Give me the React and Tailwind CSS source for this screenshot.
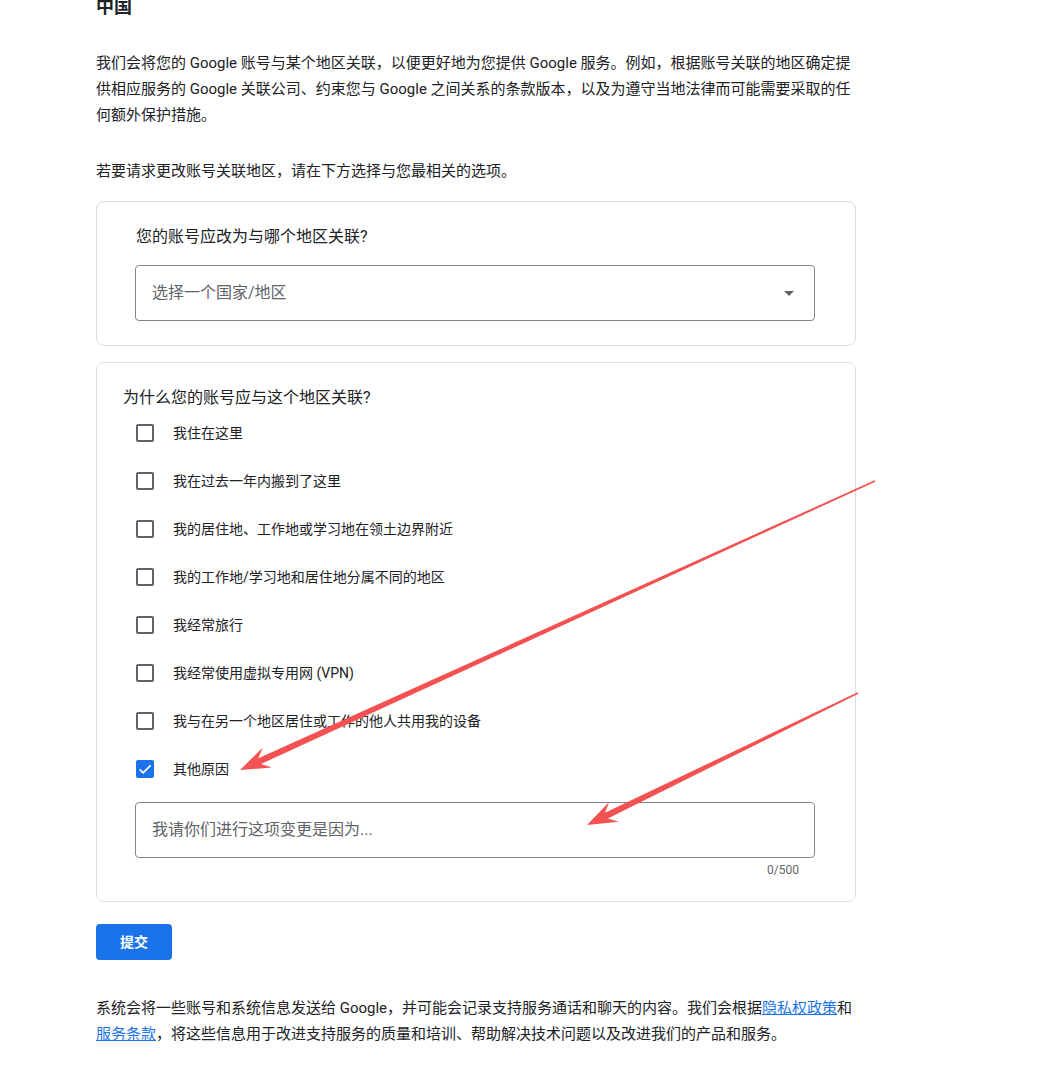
import React from 'react';

const reasons = [
  { label: '我住在这里', checked: false },
  { label: '我在过去一年内搬到了这里', checked: false },
  { label: '我的居住地、工作地或学习地在领土边界附近', checked: false },
  { label: '我的工作地/学习地和居住地分属不同的地区', checked: false },
  { label: '我经常旅行', checked: false },
  { label: '我经常使用虚拟专用网 (VPN)', checked: false },
  { label: '我与在另一个地区居住或工作的他人共用我的设备', checked: false },
  { label: '其他原因', checked: true },
];

function arrowPoints(x1, y1, x2, y2) {
  const headLen = 30;
  const headW = 11;
  const tailW = 0.8;
  const neckW = 3.2;
  const dx = x2 - x1;
  const dy = y2 - y1;
  const len = Math.hypot(dx, dy);
  const ux = dx / len;
  const uy = dy / len;
  const nx = -uy;
  const ny = ux;
  const neck = [x2 - ux * headLen * 0.72, y2 - uy * headLen * 0.72];
  const base = [x2 - ux * headLen, y2 - uy * headLen];
  const pts = [
    [x1 + nx * tailW, y1 + ny * tailW],
    [neck[0] + nx * neckW, neck[1] + ny * neckW],
    [base[0] + nx * headW, base[1] + ny * headW],
    [x2, y2],
    [base[0] - nx * headW, base[1] - ny * headW],
    [neck[0] - nx * neckW, neck[1] - ny * neckW],
    [x1 - nx * tailW, y1 - ny * tailW],
  ];
  return pts.map(p => p.join(',')).join(' ');
}

function Checkbox({ checked }) {
  if (checked) {
    return (
      <span className="flex h-[18px] w-[18px] items-center justify-center rounded-[2px] bg-[#1a73e8]">
        <svg width="16" height="16" viewBox="0 0 24 24" fill="none">
          <path d="M4 12.5l5.2 5.2L20.5 6.5" stroke="#fff" strokeWidth="2.6" />
        </svg>
      </span>
    );
  }
  return <span className="block h-[18px] w-[18px] rounded-[2px] border-2 border-[#5f6368]" />;
}

export default function App() {
  return (
    <div
      className="relative h-[1080px] w-[1064px] overflow-hidden bg-white text-[#202124]"
      style={{ fontFamily: 'Roboto, "Noto Sans CJK SC", sans-serif' }}
    >
      <div className="ml-[96px] w-[760px]">
        <h1 className="mt-[-5px] text-[18px] font-bold leading-[24px]">中国</h1>

        <p className="mt-[31px] text-[15px] leading-[26px]">
          我们会将您的 Google 账号与某个地区关联，以便更好地为您提供 Google 服务。例如，根据账号关联的地区确定提供相应服务的 Google 关联公司、约束您与 Google 之间关系的条款版本，以及为遵守当地法律而可能需要采取的任何额外保护措施。
        </p>

        <p className="mt-[30px] text-[15px] leading-[26px]">若要请求更改账号关联地区，请在下方选择与您最相关的选项。</p>

        {/* region select */}
        <div className="mt-[17px] rounded-lg border border-[#dadce0] px-[38px] pb-6 pt-6">
          <div className="pl-px text-[16px] leading-[22px]">您的账号应改为与哪个地区关联?</div>
          <div className="mt-[17px] flex h-14 w-[680px] items-center justify-between rounded border border-[#80868b] pl-4 pr-5">
            <span className="text-[16px] text-[#5f6368]">选择一个国家/地区</span>
            <svg width="10" height="5" viewBox="0 0 10 5">
              <path d="M0 0h10L5 5z" fill="#5f6368" />
            </svg>
          </div>
        </div>

        {/* reasons */}
        <div className="mt-[16px] rounded-lg border border-[#dadce0] px-[26px] pb-[23px] pt-[24px]">
          <div className="text-[16px] leading-[22px]">为什么您的账号应与这个地区关联?</div>
          <div className="flex flex-col">
            {reasons.map(r => (
              <label key={r.label} className="flex h-12 items-center">
                <span className="ml-[13px] mr-[19px]">
                  <Checkbox checked={r.checked} />
                </span>
                <span className="text-[14px]">{r.label}</span>
              </label>
            ))}
          </div>
          <div className="ml-[12px] mt-[9px] w-[680px]">
            <div className="flex h-14 items-center rounded border border-[#80868b] px-4">
              <span className="text-[16px] text-[#5f6368]">我请你们进行这项变更是因为...</span>
            </div>
            <div className="pr-4 pt-1 text-right text-[12px] leading-4 text-[#5f6368]">0/500</div>
          </div>
        </div>

        <button className="mt-[22px] flex h-9 w-[76px] items-center justify-center rounded bg-[#1a73e8] text-[14px] font-bold text-white">
          提交
        </button>

        <p className="mt-[35px] text-[15px] leading-[26px]">
          系统会将一些账号和系统信息发送给 Google，并可能会记录支持服务通话和聊天的内容。我们会根据
          <a className="text-[#1a73e8] underline">隐私权政策</a>和
          <a className="text-[#1a73e8] underline">服务条款</a>
          ，将这些信息用于改进支持服务的质量和培训、帮助解决技术问题以及改进我们的产品和服务。
        </p>
      </div>

      {/* annotation arrows */}
      <svg className="pointer-events-none absolute left-0 top-0" width="1064" height="1080">
        <polygon points={arrowPoints(875, 481, 240, 770)} fill="#f45252" />
        <polygon points={arrowPoints(858, 693, 587, 825)} fill="#f45252" />
      </svg>
    </div>
  );
}
